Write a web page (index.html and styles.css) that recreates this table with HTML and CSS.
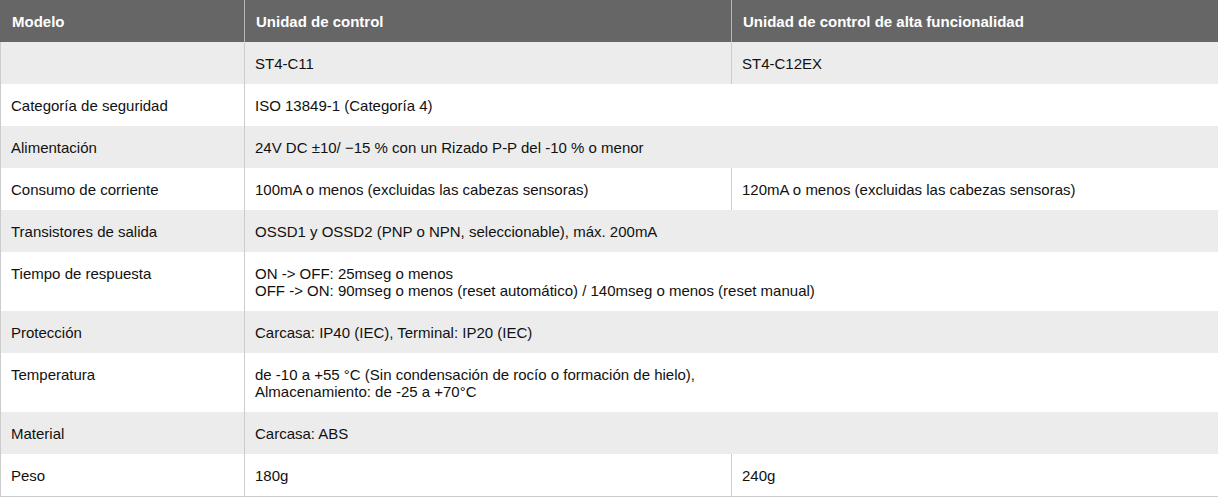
FILE: index.html
```html
<!DOCTYPE html>
<html lang="es">
<head>
<meta charset="utf-8">
<title>Especificaciones</title>
<link rel="stylesheet" href="styles.css">
</head>
<body>
<table class="spec">
  <colgroup>
    <col class="c1">
    <col class="c2">
    <col class="c3">
  </colgroup>
  <thead>
    <tr>
      <th>Modelo</th>
      <th>Unidad de control</th>
      <th>Unidad de control de alta funcionalidad</th>
    </tr>
  </thead>
  <tbody>
    <tr class="alt">
      <td></td>
      <td>ST4-C11</td>
      <td>ST4-C12EX</td>
    </tr>
    <tr>
      <td>Categoría de seguridad</td>
      <td colspan="2">ISO 13849-1 (Categoría 4)</td>
    </tr>
    <tr class="alt">
      <td>Alimentación</td>
      <td colspan="2">24V DC ±10/ −15 % con un Rizado P-P del -10 % o menor</td>
    </tr>
    <tr>
      <td>Consumo de corriente</td>
      <td>100mA o menos (excluidas las cabezas sensoras)</td>
      <td>120mA o menos (excluidas las cabezas sensoras)</td>
    </tr>
    <tr class="alt">
      <td>Transistores de salida</td>
      <td colspan="2">OSSD1 y OSSD2 (PNP o NPN, seleccionable), máx. 200mA</td>
    </tr>
    <tr>
      <td>Tiempo de respuesta</td>
      <td colspan="2">ON -&gt; OFF: 25mseg o menos<br>OFF -&gt; ON: 90mseg o menos (reset automático) / 140mseg o menos (reset manual)</td>
    </tr>
    <tr class="alt">
      <td>Protección</td>
      <td colspan="2">Carcasa: IP40 (IEC), Terminal: IP20 (IEC)</td>
    </tr>
    <tr>
      <td>Temperatura</td>
      <td colspan="2">de -10 a +55 °C (Sin condensación de rocío o formación de hielo),<br>Almacenamiento: de -25 a +70°C</td>
    </tr>
    <tr class="alt">
      <td>Material</td>
      <td colspan="2">Carcasa: ABS</td>
    </tr>
    <tr>
      <td>Peso</td>
      <td>180g</td>
      <td>240g</td>
    </tr>
  </tbody>
</table>
</body>
</html>
```

FILE: styles.css
```css
html, body {
  margin: 0;
  padding: 0;
  background: #ffffff;
}

.spec {
  width: 1218px;
  table-layout: fixed;
  border-collapse: separate;
  border-spacing: 0;
  font-family: "Liberation Sans", Arial, Helvetica, sans-serif;
  font-size: 15px;
  line-height: 17px;
  color: #111111;
  border-bottom: 1px solid #cccccc;
}

.c1 { width: 244px; }
.c2 { width: 487px; }
.c3 { width: 487px; }

.spec th {
  background: #666666;
  color: #ffffff;
  font-weight: bold;
  text-align: left;
  height: 42px;
  box-sizing: border-box;
  padding: 0 11px;
  vertical-align: middle;
  border-left: 1px solid #b5b5b5;
}

.spec th:first-child {
  border-left-color: #666666;
}

.spec td {
  padding: 13px 10px 12px;
  vertical-align: top;
  text-align: left;
  border-left: 1px solid #cccccc;
}

.spec tr.alt td {
  background: #ececec;
}
```
